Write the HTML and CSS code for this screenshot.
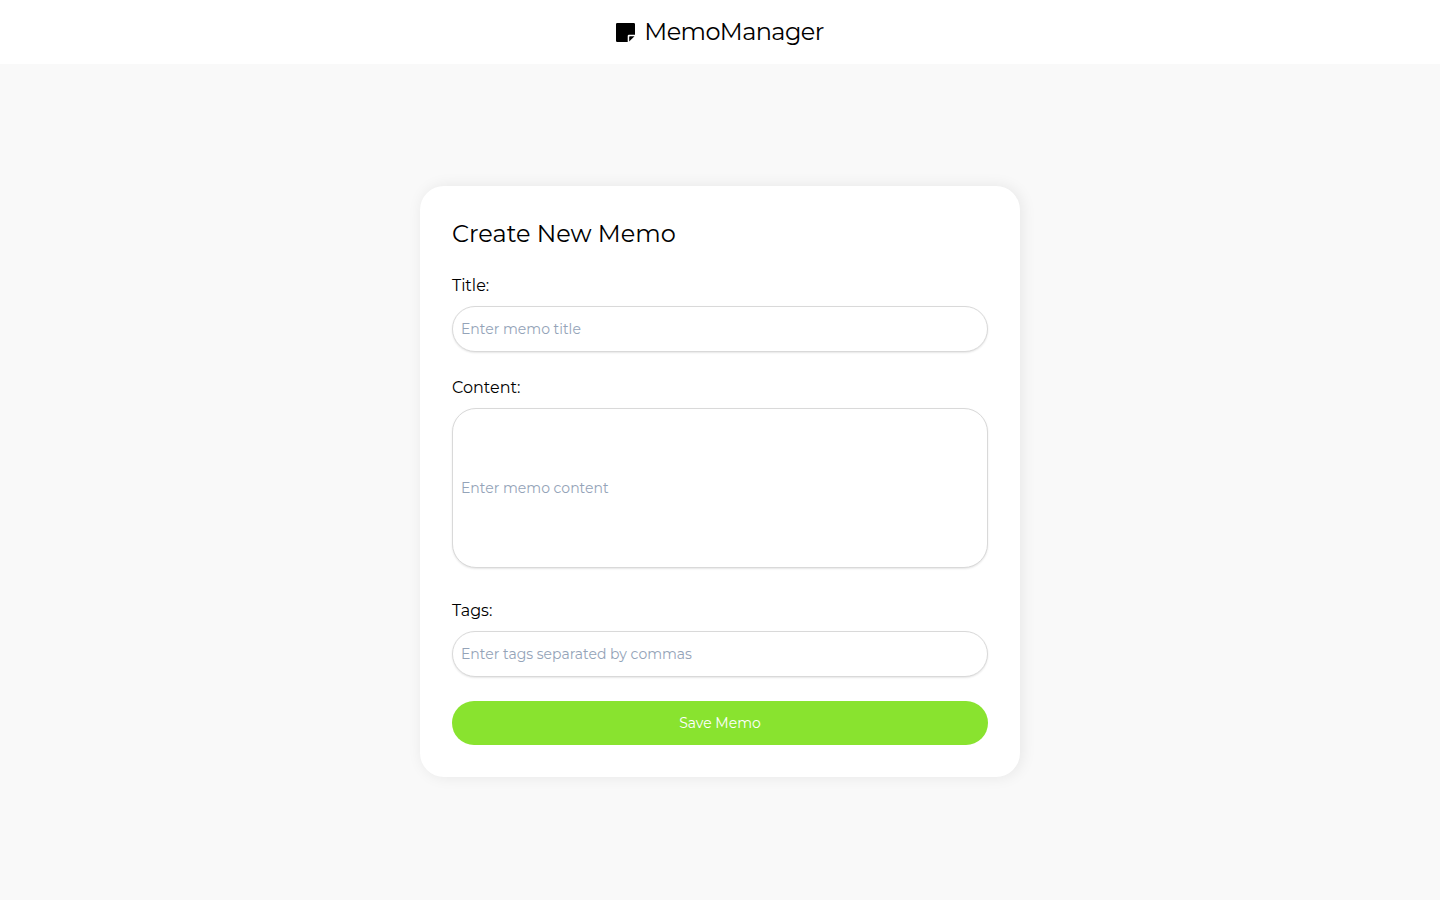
FILE: index.html
```html
<!DOCTYPE html>
<html lang="en">
<head>
<meta charset="utf-8">
<title>MemoManager</title>
<link rel="stylesheet" href="styles.css">
</head>
<body>
<header class="header">
  <svg class="logo" viewBox="0 0 19 19" width="19" height="19" aria-hidden="true">
    <path d="M1.2 0H17.8Q19 0 19 1.2V11.7H13Q11.7 11.7 11.7 13V19H1.2Q0 19 0 17.8V1.2Q0 0 1.2 0Z"/>
    <path d="M13.2 18.5V14Q13.2 13.2 14 13.2H18.5Z"/>
  </svg>
  <h1 class="brand">MemoManager</h1>
</header>
<main class="main">
  <form class="card">
    <h2 class="heading">Create New Memo</h2>
    <div class="field">
      <label class="label" for="title">Title:</label>
      <input class="control" id="title" type="text" placeholder="Enter memo title">
    </div>
    <div class="field field-content">
      <label class="label" for="content">Content:</label>
      <input class="control control-tall" id="content" type="text" placeholder="Enter memo content">
    </div>
    <div class="field">
      <label class="label" for="tags">Tags:</label>
      <input class="control" id="tags" type="text" placeholder="Enter tags separated by commas">
    </div>
    <button class="save" type="button">Save Memo</button>
  </form>
</main>
</body>
</html>
```

FILE: styles.css
```css
* { box-sizing: border-box; }
body {
  margin: 0;
  min-height: 100vh;
  display: flex;
  flex-direction: column;
  background: #f9f9f9;
  color: #000;
  font-family: Montserrat, Inter, "Open Sans", sans-serif;
  font-weight: 400;
}
.header {
  height: 64px;
  display: flex;
  align-items: center;
  justify-content: center;
  gap: 9px;
  background: #fff;
}
.logo { display: block; margin-top: 1px; }
.brand, .heading { margin: 0; font-size: 24px; line-height: 32px; font-weight: 400; }
.brand { letter-spacing: -0.025em; }
.main { flex: 1; display: flex; align-items: center; justify-content: center; }
.card {
  width: 600px;
  height: 591px;
  margin-top: -1px;
  padding: 32px;
  border-radius: 24px;
  background: #fff;
  box-shadow: 2px 0 15px rgba(0, 0, 0, .08);
}
.heading { margin-bottom: 24px; }
.field { margin-bottom: 24px; }
.field-content { margin-bottom: 31px; }
.label { display: block; width: max-content; margin-bottom: 8px; font-size: 16px; line-height: 24px; }
.control {
  display: block;
  width: 100%;
  height: 46px;
  padding: 8px;
  border: 1px solid #d9d9d9;
  border-radius: 24px;
  background: #fff;
  font: inherit;
  font-size: 14px;
  line-height: 20px;
  box-shadow: 0 1px 2px rgba(0, 0, 0, .1);
}
.control-tall { height: 160px; }
.control::placeholder { color: #94a3b8; opacity: 1; }
.save {
  display: block;
  width: 100%;
  height: 44px;
  border: 0;
  border-radius: 24px;
  background: #89e32f;
  color: #fff;
  font: inherit;
  font-size: 14px;
  line-height: 20px;
}
```
